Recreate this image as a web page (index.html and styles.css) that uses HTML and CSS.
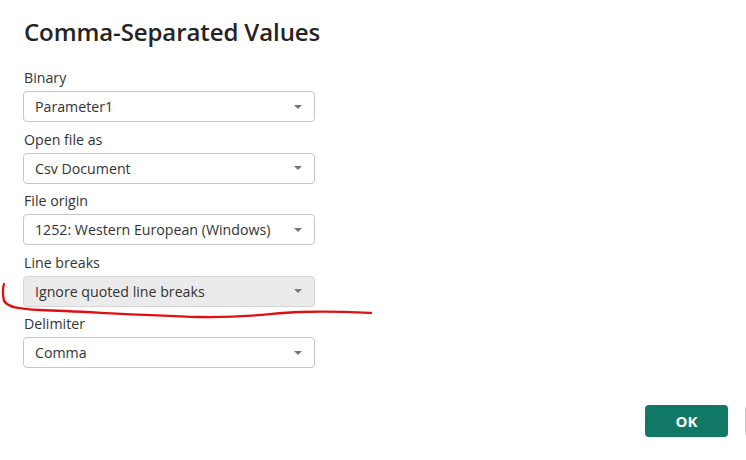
FILE: index.html
```html
<!DOCTYPE html>
<html>

<head>
    <title>Comma-Separated Values</title>
    <link rel="stylesheet" href="styles.css">
</head>

<body>
    <div class="dialog">
        <h1 class="dialog-title">Comma-Separated Values</h1>

        <!-- Settings -->
        <div class="field">
            <div class="field-label">Binary</div>
            <div class="dropdown"><span>Parameter1</span><span class="caret"></span></div>
        </div>
        <div class="field">
            <div class="field-label">Open file as</div>
            <div class="dropdown"><span>Csv Document</span><span class="caret"></span></div>
        </div>
        <div class="field">
            <div class="field-label">File origin</div>
            <div class="dropdown"><span>1252: Western European (Windows)</span><span class="caret"></span></div>
        </div>
        <div class="field">
            <div class="field-label">Line breaks</div>
            <div class="dropdown disabled"><span>Ignore quoted line breaks</span><span class="caret"></span></div>
        </div>
        <div class="field">
            <div class="field-label">Delimiter</div>
            <div class="dropdown"><span>Comma</span><span class="caret"></span></div>
        </div>

        <!-- Footer buttons (Cancel is cut off by the window edge) -->
        <div class="dialog-footer">
            <button class="btn btn-primary">OK</button>
            <button class="btn btn-secondary" aria-label="Cancel"></button>
        </div>
    </div>

    <!-- red pen mark over the screenshot -->
    <svg class="scribble" width="746" height="460" viewBox="0 0 746 460">
        <path d="M4 284 C2 290 3 296 4 301 C8 307 18 309 40 310 C90 312 140 315 200 317 C250 318 270 313 300 312 C330 311 350 312 371 313"
              fill="none" stroke="#e01010" stroke-width="2.3" stroke-linecap="round" />
    </svg>
</body>

</html>
```

FILE: styles.css
```css
body {
    margin: 0;
    background-color: #fff;
    font-family: 'Segoe UI', 'Open Sans', 'Noto Sans', sans-serif;
    color: #333;
    overflow: hidden;
    width: 746px;
    height: 460px;
}

.dialog {
    padding: 16px 0 0 23px;
}

.dialog-title {
    margin: 0 0 20px 1px;
    font-size: 24px;
    line-height: 32px;
    font-weight: 600;
    color: #252423;
    letter-spacing: -0.1px;
}

.field {
    margin-bottom: 7.5px;
}

.field-label {
    font-size: 14.2px;
    line-height: 20px;
    margin: 0 0 3px 1px;
    color: #333;
}

.dropdown {
    box-sizing: border-box;
    width: 292px;
    height: 31px;
    border: 1px solid #c8c8c8;
    border-radius: 4px;
    background-color: #fff;
    display: flex;
    align-items: center;
    justify-content: space-between;
    padding: 0 12px 0 11px;
    font-size: 14.2px;
    color: #333;
}

.dropdown.disabled {
    background-color: #ebebeb;
    border-color: #d6d6d6;
}

.caret {
    width: 0;
    height: 0;
    border-left: 4px solid transparent;
    border-right: 4px solid transparent;
    border-top: 4px solid #777;
}

.dialog-footer {
    display: flex;
    gap: 17px;
    margin-top: 37px;
    padding-left: 622px;
}

.btn {
    flex: none;
    box-sizing: border-box;
    width: 83px;
    height: 32px;
    border-radius: 4px;
    font-family: 'Segoe UI', 'Open Sans', sans-serif;
    font-size: 15px;
    font-weight: 700;
    cursor: pointer;
}

.btn-primary {
    background-color: #117865;
    color: #fff;
    border: none;
}

.btn-secondary {
    background-color: #fff;
    border: 1px solid #c8c8c8;
}

.scribble {
    position: absolute;
    left: 0;
    top: 0;
    pointer-events: none;
}
```
